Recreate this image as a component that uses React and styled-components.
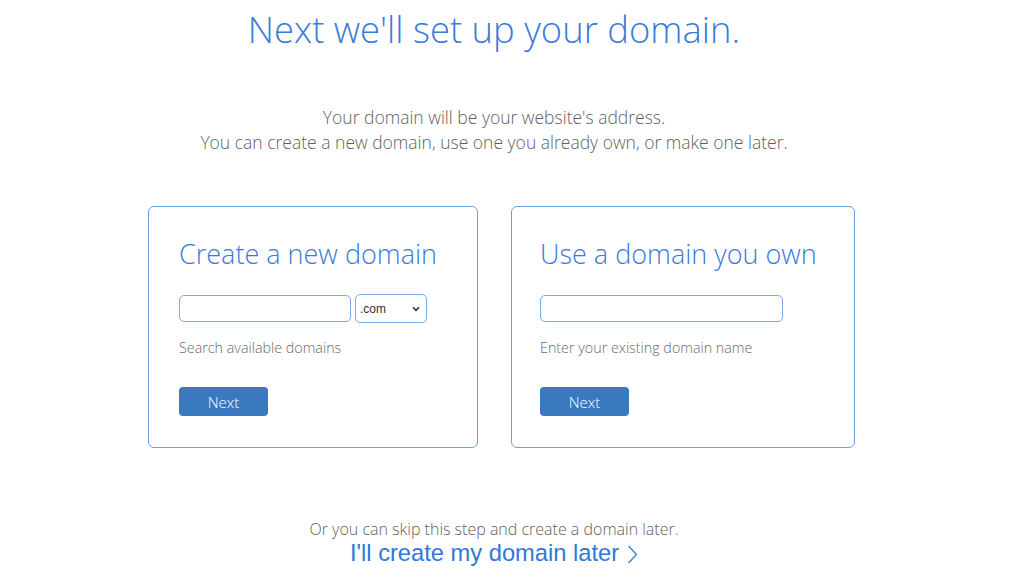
import React from "react";
import styled, { createGlobalStyle } from "styled-components";

const GlobalStyle = createGlobalStyle`
  html, body { margin: 0; padding: 0; background: #ffffff; }
  body { font-family: "Open Sans", "Liberation Sans", sans-serif; }
  * { box-sizing: border-box; }
`;

const Page = styled.main`
  width: 1024px;
  padding: 8px 36px 0 0;
  display: flex;
  flex-direction: column;
  align-items: center;
`;

const Title = styled.h1`
  margin: 0;
  font-size: 36.4px;
  line-height: 43px;
  font-weight: 300;
  color: #3a7bd9;
  text-align: center;
`;

const Intro = styled.p`
  margin: 54px 0 0;
  font-size: 17.5px;
  line-height: 25px;
  font-weight: 300;
  color: #5f5f5f;
  text-align: center;
`;

const CardRow = styled.div`
  margin-top: 51px;
  padding-left: 15px;
  display: flex;
  gap: 33px;
`;

const Card = styled.section`
  width: ${(p) => p.$width}px;
  border: 1px solid #6c9ee3;
  border-radius: 6px;
  padding: 30px 20px 31px ${(p) => p.$padLeft}px;
  display: flex;
  flex-direction: column;
  align-items: flex-start;
`;

const CardTitle = styled.h2`
  margin: 0;
  font-size: 27px;
  line-height: 33px;
  font-weight: 300;
  color: #3a7bd9;
  white-space: nowrap;
`;

const FieldRow = styled.div`
  margin-top: 24px;
  display: flex;
  align-items: center;
  gap: 4px;
  height: 29px;
`;

const TextInput = styled.input`
  width: ${(p) => p.$width}px;
  height: 27px;
  border: 1px solid #7ea8e4;
  border-radius: 5px;
  padding: 0 8px;
  font-size: 14px;
  outline: none;
  background: #fff;
`;

const SelectWrap = styled.div`
  position: relative;
  width: 72px;
  height: 29px;
`;

const Select = styled.select`
  appearance: none;
  -webkit-appearance: none;
  width: 100%;
  height: 100%;
  border: 1px solid #7ea8e4;
  border-radius: 5px;
  padding: 0 0 0 4px;
  font-family: "Liberation Sans", Arial, sans-serif;
  font-size: 12px;
  color: #333;
  background: #fff;
  outline: none;
`;

const SelectArrow = styled.svg`
  position: absolute;
  right: 7px;
  top: 12px;
  width: 8px;
  height: 6px;
  pointer-events: none;
`;

const Helper = styled.p`
  margin: 15px 0 0;
  font-size: 14.3px;
  line-height: 20px;
  font-weight: 300;
  color: #6a6a6a;
`;

const NextButton = styled.button`
  margin-top: 29px;
  width: 89px;
  height: 29px;
  border: none;
  border-radius: 4px;
  background: #3a79bf;
  color: #ffffff;
  font-family: "Open Sans", sans-serif;
  font-size: 15px;
  font-weight: 300;
  cursor: pointer;
`;

const Skip = styled.p`
  margin: 70px 0 0;
  font-size: 16px;
  line-height: 22px;
  font-weight: 300;
  color: #5f5f5f;
  text-align: center;
`;

const LaterLink = styled.a`
  margin-top: -1px;
  display: flex;
  align-items: center;
  gap: 8px;
  font-family: "Liberation Sans", Arial, sans-serif;
  font-size: 23.7px;
  line-height: 29px;
  color: #2f79d6;
  text-decoration: none;
  cursor: pointer;
`;

const Chevron = styled.svg`
  width: 11px;
  height: 19px;
  margin-top: 1px;
`;

export default function App() {
  return (
    <>
      <GlobalStyle />
      <Page>
        <Title>Next we'll set up your domain.</Title>
        <Intro>
          Your domain will be your website's address.
          <br />
          You can create a new domain, use one you already own, or make one later.
        </Intro>
        <CardRow>
          <Card $width={330} $padLeft={30}>
            <CardTitle>Create a new domain</CardTitle>
            <FieldRow>
              <TextInput type="text" $width={172} />
              <SelectWrap>
                <Select defaultValue=".com">
                  <option>.com</option>
                  <option>.net</option>
                  <option>.org</option>
                </Select>
                <SelectArrow viewBox="0 0 8 6">
                  <polyline points="1,1.2 4,4.4 7,1.2" fill="none" stroke="#333" strokeWidth="1.6" />
                </SelectArrow>
              </SelectWrap>
            </FieldRow>
            <Helper>Search available domains</Helper>
            <NextButton>Next</NextButton>
          </Card>
          <Card $width={344} $padLeft={28}>
            <CardTitle>Use a domain you own</CardTitle>
            <FieldRow>
              <TextInput type="text" $width={243} />
            </FieldRow>
            <Helper>Enter your existing domain name</Helper>
            <NextButton>Next</NextButton>
          </Card>
        </CardRow>
        <Skip>Or you can skip this step and create a domain later.</Skip>
        <LaterLink>
          I'll create my domain later
          <Chevron viewBox="0 0 11 19">
            <polyline points="1.5,1 9.5,9.5 1.5,18" fill="none" stroke="#2f79d6" strokeWidth="1.2" />
          </Chevron>
        </LaterLink>
      </Page>
    </>
  );
}
